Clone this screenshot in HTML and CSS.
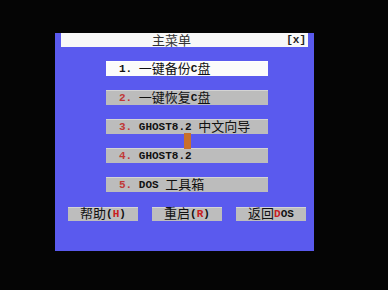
FILE: index.html
```html
<!DOCTYPE html>
<html lang="zh-CN">
<head>
    <meta charset="UTF-8">
    <title>主菜单</title>
    <link rel="stylesheet" href="styles.css">
</head>
<body>

<div class="panel">
    <div class="title-bar">
        <span class="title cn">主菜单</span>
        <span class="close">[x]</span>
    </div>

    <div class="menu">
        <div class="item selected"><span class="num">1.</span> <span class="cn">一键备份</span>C<span class="cn">盘</span></div>
        <div class="item"><span class="num">2.</span> <span class="cn">一键恢复</span>C<span class="cn">盘</span></div>
        <div class="item"><span class="num">3.</span> GHOST8.2 <span class="cn">中文向导</span></div>
        <div class="item"><span class="num">4.</span> GHOST8.2</div>
        <div class="item"><span class="num">5.</span> DOS <span class="cn">工具箱</span></div>
        <!-- cursor artifact between item 3 and 4 -->
        <div class="cursor"></div>
    </div>

    <div class="buttons">
        <div class="btn"><span class="cn">帮助</span>(<span class="key">H</span>)</div>
        <div class="btn"><span class="cn">重启</span>(<span class="key">R</span>)</div>
        <div class="btn"><span class="cn">返回</span><span class="key">D</span>OS</div>
    </div>
</div>

</body>
</html>
```

FILE: styles.css
```css
body {
    margin: 0;
    background-color: #050505;
    font-family: 'Liberation Mono', 'DejaVu Sans Mono', monospace;
    font-weight: bold;
    font-size: 11px;
    color: #111;
}

.cn {
    font-family: 'Noto Sans CJK SC', sans-serif;
    font-weight: normal;
    font-size: 13px;
    line-height: 8px;
    vertical-align: -1px;
}

.panel {
    margin: 33px 0 0 55px;
    width: 259px;
    height: 218px;
    background-color: #5a5aee;
    display: flex;
    flex-direction: column;
}

.title-bar {
    margin: 0 6px;
    height: 14px;
    background-color: #f8f8f8;
    display: flex;
    align-items: center;
    line-height: 14px;
}

.title {
    color: #333;
    margin-left: 91px;
}

.close {
    margin-left: auto;
    margin-right: 2px;
    color: #222;
}

.menu {
    position: relative;
    margin: 14px 0 0 51px;
    width: 162px;
    display: flex;
    flex-direction: column;
    gap: 14px;
}

.item {
    height: 15px;
    line-height: 14px;
    padding-left: 13px;
    background-color: #bcbcbc;
    border-top: 1px solid #d4d4d4;
    box-sizing: border-box;
    white-space: pre;
}

.item.selected {
    background-color: #fbfbfb;
    border-top-color: #fff;
}

.num {
    color: #c03838;
}

.selected .num {
    color: #111;
}

.cursor {
    position: absolute;
    left: 78px;
    top: 72px;
    width: 7px;
    height: 16px;
    background-color: #c8702c;
}

.buttons {
    margin: 15px 0 0 13px;
    display: flex;
    gap: 14px;
}

.btn {
    width: 70px;
    height: 14px;
    line-height: 13px;
    background-color: #bdbdbd;
    border-top: 1px solid #d4d4d4;
    box-sizing: border-box;
    text-align: center;
    white-space: pre;
}

.key {
    color: #c82020;
}
```
